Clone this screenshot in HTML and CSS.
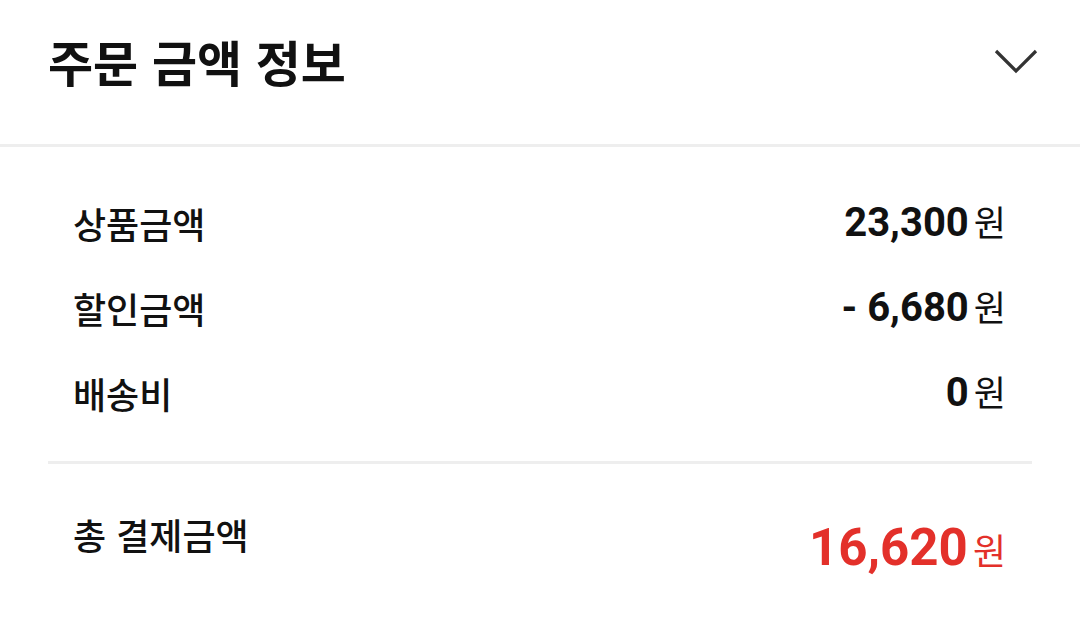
FILE: index.html
```html
<!DOCTYPE html>
<html lang="ko">
<head>
<meta charset="utf-8">
<link rel="stylesheet" href="styles.css">
</head>
<body>
<div class="panel">
  <header class="head">
    <h1 class="title">주문 금액 정보</h1>
    <svg class="chev" width="46" height="28" viewBox="0 0 46 28"><polyline points="2,3 22,23 42,3" fill="none" stroke="#333" stroke-width="3.2"/></svg>
  </header>
  <section class="body">
    <div class="rows">
      <div class="row"><span class="label">상품금액</span><span class="val"><b class="num">23,300</b><span class="won">원</span></span></div>
      <div class="row"><span class="label">할인금액</span><span class="val"><b class="num">- 6,680</b><span class="won">원</span></span></div>
      <div class="row"><span class="label">배송비</span><span class="val"><b class="num">0</b><span class="won">원</span></span></div>
    </div>
    <div class="total">
      <span class="label tl">총 결제금액</span>
      <span class="val red tv"><b class="num big">16,620</b><span class="won bigwon">원</span></span>
    </div>
  </section>
</div>
</body>
</html>
```
FILE: styles.css
```css
html, body { margin: 0; padding: 0; background: #fff; }
body { font-family: "Noto Sans CJK KR", "Noto Sans", sans-serif; color: #111; width: 1080px; height: 617px; overflow: hidden; }
.head { height: 124px; display: flex; align-items: center; justify-content: space-between; padding: 0 40px 20px 48px; border-bottom: 3px solid #eeeeee; }
.title { margin: 0; font-size: 49px; font-weight: 700; color: #111; line-height: 1; position: relative; top: -2px; }
.chev { display: block; }
.body { padding: 33px 48px 0; }
.rows { border-bottom: 3px solid #eeeeee; padding-bottom: 26px; }
.row { height: 85px; display: flex; align-items: center; justify-content: space-between; padding: 0 26px 0 25px; }
.label { font-size: 36px; font-weight: 500; color: #111; line-height: 1; }
.val { display: flex; align-items: baseline; gap: 5px; }
.num { font-family: Roboto, "Liberation Sans", sans-serif; font-weight: 700; font-size: 40px; line-height: 1; color: #111; }
.won { font-size: 35px; font-weight: 400; line-height: 1; color: #111; }
.total { height: 150px; display: flex; align-items: center; justify-content: space-between; padding: 0 26px 0 25px; margin-top: -4px; }
.tl { position: relative; top: -1px; }
.tv { position: relative; top: 12px; }
.red .num, .red .won { color: #e3302a; }
.big { font-size: 51px; }
.bigwon { font-size: 36px; }
```
